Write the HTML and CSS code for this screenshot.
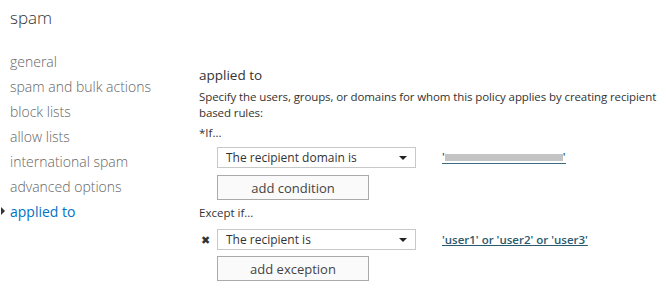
FILE: index.html
```html
<!DOCTYPE html>
<html lang="en">
<head>
  <meta charset="UTF-8">
  <title>spam</title>
  <link rel="stylesheet" href="styles.css">
</head>
<body>
  <div class="page">
    <h1 class="title">spam</h1>
    <div class="layout">
      <ul class="nav">
        <li>general</li>
        <li>spam and bulk actions</li>
        <li>block lists</li>
        <li>allow lists</li>
        <li>international spam</li>
        <li>advanced options</li>
        <li class="active">applied to</li>
      </ul>

      <div class="content">
        <h2>applied to</h2>
        <p class="desc">Specify the users, groups, or domains for whom this policy applies by creating recipient based rules:</p>

        <div class="label">*If...</div>
        <div class="rule">
          <span class="remove"></span>
          <div class="select">The recipient domain is <span class="caret"></span></div>
          <a class="value blurred" href="#">'<span class="blur"></span>'</a>
        </div>
        <div class="rule add">
          <span class="remove"></span>
          <button class="btn">add condition</button>
        </div>

        <div class="label except">Except if...</div>
        <div class="rule second">
          <span class="remove">&#x2716;</span>
          <div class="select">The recipient is <span class="caret"></span></div>
          <a class="value" href="#">'user1' or 'user2' or 'user3'</a>
        </div>
        <div class="rule add last">
          <span class="remove"></span>
          <button class="btn">add exception</button>
        </div>
      </div>
    </div>
  </div>
</body>
</html>
```

FILE: styles.css
```css
body {
  margin: 0;
  font-family: "Open Sans", sans-serif;
  background: #fff;
  color: #333;
}
.page {
  padding: 6px 0 0 10px;
}
.title {
  font-size: 17px;
  font-weight: 300;
  color: #333;
  margin: 0;
  line-height: 24px;
}
.layout {
  display: flex;
}
.nav {
  list-style: none;
  margin: 19px 0 0;
  padding: 0;
  width: 189px;
}
.nav li {
  font-size: 14px;
  font-weight: 300;
  color: #666;
  line-height: 25px;
  position: relative;
}
.nav li.active {
  color: #0072c6;
  font-weight: 400;
}
.nav li.active::before {
  content: "";
  position: absolute;
  left: -9px;
  top: 8px;
  border-left: 4px solid #333;
  border-top: 4px solid transparent;
  border-bottom: 4px solid transparent;
}
.content {
  padding-top: 35px;
}
.content h2 {
  font-size: 13.5px;
  font-weight: 400;
  color: #333;
  margin: 0 0 4px;
  line-height: 20px;
}
.desc {
  font-size: 11.5px;
  letter-spacing: -0.1px;
  color: #333;
  margin: 0;
  line-height: 16px;
  width: 466px;
}
.label {
  font-size: 11.5px;
  color: #333;
  line-height: 16px;
  margin-top: 4px;
}
.label.except {
  margin-top: 5px;
}
.rule {
  display: flex;
  align-items: center;
  height: 21px;
  margin-top: 6px;
}
.rule.add {
  height: 25px;
  margin-top: 7px;
}
.rule.second {
  margin-top: 8px;
}
.rule.last {
  margin-top: 6px;
}
.remove {
  width: 18px;
  font-size: 11px;
  color: #333;
  padding-left: 2px;
  box-sizing: border-box;
}
.select {
  width: 199px;
  height: 21px;
  box-sizing: border-box;
  border: 1px solid #c8c8c8;
  font-size: 12px;
  line-height: 19px;
  padding: 0 8px;
  color: #333;
  display: flex;
  justify-content: space-between;
  align-items: center;
}
.caret {
  border-top: 4px solid #222;
  border-left: 4px solid transparent;
  border-right: 4px solid transparent;
}
.value {
  margin-left: 26px;
  font-size: 11.5px;
  font-weight: 600;
  color: #2a5a6e;
  text-decoration: underline;
}
.blurred {
  display: flex;
  align-items: center;
  text-decoration: none;
  border-bottom: 1px solid #3d6b80;
  line-height: 12px;
}
.blur {
  display: inline-block;
  width: 118px;
  height: 7px;
  background: #c4c4c4;
}
.btn {
  width: 152px;
  height: 25px;
  border: 1px solid #aaa;
  background: #fafafa;
  font-family: inherit;
  font-size: 13px;
  color: #444;
  padding: 0;
}
```
